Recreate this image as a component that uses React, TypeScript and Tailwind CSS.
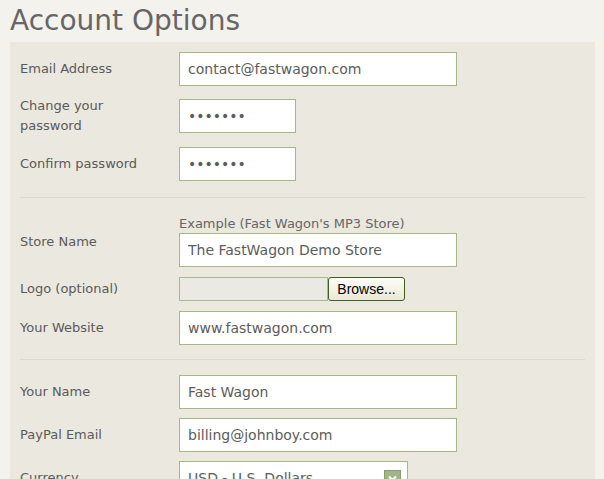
const fieldClass =
  'h-[34px] border border-[#a5b783] bg-white px-2 text-[14px] text-[#5c5c5c] outline-none';

function Row({ label, children, className = '' }: { label: React.ReactNode; children: React.ReactNode; className?: string }) {
  return (
    <div className={`flex h-[34px] items-center ${className}`}>
      <div className="w-[159px] shrink-0 text-[13px] leading-5 text-[#5a5a5a]">{label}</div>
      <div className="flex items-center">{children}</div>
    </div>
  );
}

export default function App() {
  return (
    <div className="h-[479px] w-[604px] overflow-hidden bg-[#f4f2ed] pl-[10px] font-['DejaVu_Sans',sans-serif]">
      <h1 className="pt-[3px] text-[28px] leading-[36px] text-[#666]">Account Options</h1>
      <div className="mt-[3px] w-[585px] bg-[#ebe8df] px-[10px] pt-[10px] pb-6">
        <Row label="Email Address">
          <input readOnly value="contact@fastwagon.com" className={`${fieldClass} w-[278px]`} />
        </Row>
        <Row label={<>Change your<br />password</>} className="mt-[13px]">
          <input readOnly type="password" value="1234567" className={`${fieldClass} w-[117px]`} />
        </Row>
        <Row label="Confirm password" className="mt-[14px]">
          <input readOnly type="password" value="1234567" className={`${fieldClass} w-[117px]`} />
        </Row>

        <div className="mt-4 h-px bg-[#dcd9cc]" />

        <div className="mt-[18px] flex">
          <div className="w-[159px] shrink-0 pt-[16px] text-[13px] leading-5 text-[#5a5a5a]">Store Name</div>
          <div>
            <div className="text-[13px] leading-[16px] text-[#666]">Example (Fast Wagon's MP3 Store)</div>
            <input readOnly value="The FastWagon Demo Store" className={`${fieldClass} mt-[1px] w-[278px]`} />
          </div>
        </div>
        <Row label="Logo (optional)" className="mt-[10px] !h-6">
          <div className="h-6 w-[149px] border border-[#a9b98e] bg-[#ebe9e3]" />
          <button className="h-6 w-[77px] rounded-[3px] border border-[#3d5e1f] bg-gradient-to-b from-[#fdfdf6] to-[#ebe8d6] font-['Liberation_Sans',sans-serif] text-[14px] text-black">
            Browse...
          </button>
        </Row>
        <Row label="Your Website" className="mt-[10px]">
          <input readOnly value="www.fastwagon.com" className={`${fieldClass} w-[278px]`} />
        </Row>

        <div className="mt-[14px] h-px bg-[#dcd9cc]" />

        <Row label="Your Name" className="mt-[15px]">
          <input readOnly value="Fast Wagon" className={`${fieldClass} w-[278px]`} />
        </Row>
        <Row label="PayPal Email" className="mt-[9px]">
          <input readOnly value="billing@johnboy.com" className={`${fieldClass} w-[278px]`} />
        </Row>
        <Row label="Currency" className="mt-[9px]">
          <div className="flex h-[34px] w-[229px] items-center justify-between border border-[#a5b783] bg-white pl-2 pr-[6px] text-[14px] text-[#5c5c5c]">
            <span>USD - U.S. Dollars</span>
            <span className="flex h-[17px] w-[17px] items-center justify-center border border-[#8a9c6c] bg-[#a4b48a]">
              <svg width="11" height="11" viewBox="0 0 11 11">
                <path d="M2 3.5 L5.5 7 L9 3.5" stroke="#fff" strokeWidth="2" fill="none" />
              </svg>
            </span>
          </div>
        </Row>
      </div>
    </div>
  );
}
